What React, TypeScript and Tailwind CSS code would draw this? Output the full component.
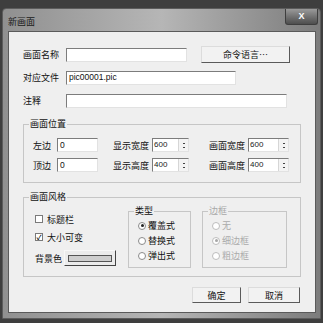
const cjk = { fontFamily: '"Noto Sans CJK SC", "Liberation Sans", sans-serif' };

function Field({ w, value }: { w: string; value?: string }) {
  return (
    <div className={`${w} h-[14px] bg-white border border-t-[#7c7c7c] border-l-[#7c7c7c] border-b-[#e2e2e2] border-r-[#e2e2e2] flex items-center pl-[2px] text-[8.5px] leading-none text-[#111] font-['Liberation_Sans']`}>
      {value}
    </div>
  );
}

function Spin({ w, value }: { w: string; value: string }) {
  return (
    <div className={`${w} h-[14px] bg-white border border-t-[#7c7c7c] border-l-[#7c7c7c] border-b-[#e2e2e2] border-r-[#e2e2e2] flex items-stretch`}>
      <div className="flex-1 flex items-center pl-[1px] text-[8px] leading-none text-[#222] font-['Liberation_Sans']">{value}</div>
      <div className="w-[10px] bg-[#f4f4f4] border-l border-[#d6d6d6] flex flex-col items-center justify-center gap-[3px]">
        <span className="block w-[2px] h-[1px] bg-[#444]" />
        <span className="block w-[2px] h-[1px] bg-[#444]" />
      </div>
    </div>
  );
}

function Btn({ w, label, h = "h-[16px]" }: { w: string; label: string; h?: string }) {
  return (
    <div className={`${w} ${h} bg-[#f2f2f2] border border-t-[#dcdcdc] border-l-[#dcdcdc] border-b-[#5a5a5a] border-r-[#5a5a5a] flex items-center justify-center text-[9px] leading-none text-[#111]`}>
      {label}
    </div>
  );
}

function Group({ title, className, children, dim }: { title: string; className: string; children: React.ReactNode; dim?: boolean }) {
  return (
    <div className={`relative border border-[#c6c6c6] ${className}`}>
      <span className={`absolute -top-[6px] left-[5px] bg-[#efefef] px-[1px] text-[9px] leading-none ${dim ? "text-[#a8a8a8]" : "text-[#111]"}`}>{title}</span>
      {children}
    </div>
  );
}

function Radio({ label, checked, dim }: { label: string; checked?: boolean; dim?: boolean }) {
  return (
    <div className="flex items-center h-[15px]">
      <span className={`w-[8px] h-[8px] rounded-full border bg-white flex items-center justify-center ${dim ? "border-[#bdbdbd]" : "border-[#8a8a8a]"}`}>
        {checked && <span className={`w-[3px] h-[3px] rounded-full ${dim ? "bg-[#a8a8a8]" : "bg-[#222]"}`} />}
      </span>
      <span className={`ml-[2px] text-[9px] leading-none ${dim ? "text-[#ababab]" : "text-[#111]"}`}>{label}</span>
    </div>
  );
}

function Check({ label, checked }: { label: string; checked?: boolean }) {
  return (
    <div className="flex items-center h-[18px]">
      <span className="w-[8px] h-[8px] border border-[#7a7a7a] bg-white flex items-center justify-center text-[7px] font-bold leading-none text-[#111]">
        {checked ? "✓" : ""}
      </span>
      <span className="ml-[4px] text-[9px] leading-none text-[#111]">{label}</span>
    </div>
  );
}

export default function App() {
  return (
    <div className="w-[323px] h-[323px] bg-[#3e3e3e] overflow-hidden" style={cjk}>
      <div className="ml-[2px] mt-[8px] w-[319px] h-[311px] rounded-t-[4px] bg-gradient-to-r from-[#909090] via-[#b6b6b6] to-[#7c7c7c] border border-[#5c5c5c] flex flex-col">
        <div className="h-[22px] flex items-start justify-between">
          <span className="mt-[8px] ml-[5px] text-[9px] leading-none text-[#1a1a1a]">新画面</span>
          <div className="mr-[2px] w-[33px] h-[16px] rounded-b-[3px] border border-[#3e3e3e] border-t-0 bg-gradient-to-b from-[#9a9a9a] to-[#4e4e4e] flex items-center justify-center text-[9px] font-bold leading-none text-white font-['Liberation_Sans']">
            X
          </div>
        </div>
        <div className="ml-[5px] mr-[4px] h-[282px] bg-[#efefef] border border-[#5a5a5a] pl-[14px] pt-[11px]">
          <div className="h-[23px] flex items-center">
            <span className="w-[43px] text-[9px] leading-none text-[#111]">画面名称</span>
            <Field w="w-[121px]" />
            <div className="ml-[14px]">
              <Btn w="w-[89px]" h="h-[17px]" label="命令语言…" />
            </div>
          </div>
          <div className="h-[23px] flex items-center">
            <span className="w-[43px] text-[9px] leading-none text-[#111]">对应文件</span>
            <Field w="w-[170px]" value="pic00001.pic" />
          </div>
          <div className="h-[23px] flex items-center">
            <span className="w-[43px] text-[9px] leading-none text-[#111]">注释</span>
            <Field w="w-[221px]" />
          </div>

          <Group title="画面位置" className="mt-[12px] w-[278px] h-[59px] pt-[10px] pl-[9px]">
            {[["左边", "显示宽度", "600", "画面宽度", "600"], ["顶边", "显示高度", "400", "画面高度", "400"]].map((r) => (
              <div key={r[0]} className="h-[20px] flex items-center text-[9px] leading-none text-[#111]">
                <span className="w-[24px]">{r[0]}</span>
                <Field w="w-[41px]" value="0" />
                <span className="ml-[15px] w-[39px]">{r[1]}</span>
                <Spin w="w-[37px]" value={r[2]} />
                <span className="ml-[20px] w-[39px]">{r[3]}</span>
                <Spin w="w-[41px]" value={r[4]} />
              </div>
            ))}
          </Group>

          <Group title="画面风格" className="mt-[14px] w-[278px] h-[80px] flex">
            <div className="w-[104px] pl-[11px] pt-[12px] flex flex-col">
              <Check label="标题栏" />
              <Check label="大小可变" checked />
              <div className="mt-[4px] flex items-center">
                <span className="text-[9px] leading-none text-[#111]">背景色</span>
                <div className="ml-[2px] w-[52px] h-[16px] bg-[#ececec] border border-t-[#f8f8f8] border-l-[#f8f8f8] border-b-[#444] border-r-[#444] flex items-center justify-center">
                  <span className="w-[44px] h-[7px] bg-[#cfcfcf] border border-[#555]" />
                </div>
              </div>
            </div>
            <Group title="类型" className="mt-[13px] w-[63px] h-[57px] pl-[9px] pt-[6px]">
              <Radio label="覆盖式" checked />
              <Radio label="替换式" />
              <Radio label="弹出式" />
            </Group>
            <Group title="边框" dim className="ml-[11px] mt-[13px] w-[85px] h-[57px] pl-[9px] pt-[6px]">
              <Radio label="无" dim />
              <Radio label="细边框" checked dim />
              <Radio label="粗边框" dim />
            </Group>
          </Group>

          <div className="mt-[10px] w-[277px] flex justify-end gap-[7px]">
            <Btn w="w-[49px]" label="确定" />
            <Btn w="w-[52px]" label="取消" />
          </div>
        </div>
      </div>
    </div>
  );
}
